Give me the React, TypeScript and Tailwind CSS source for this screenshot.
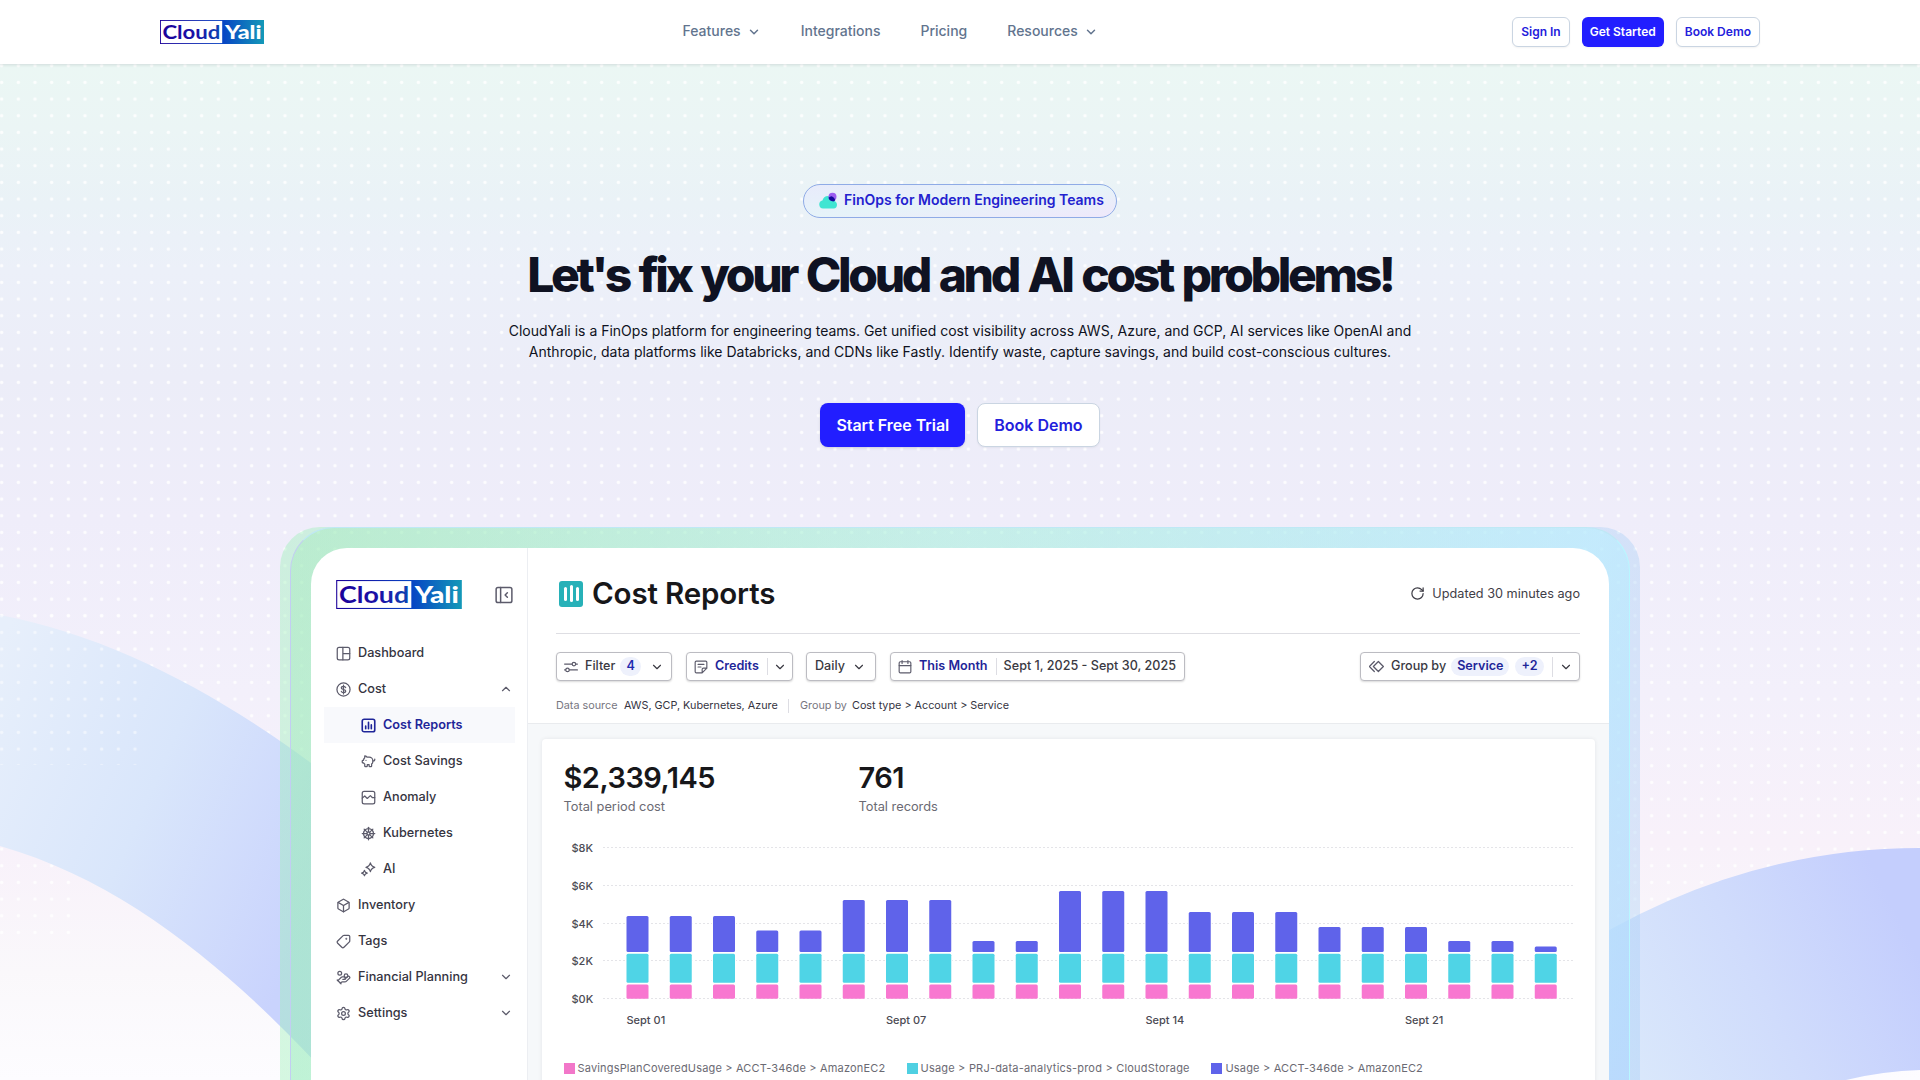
import React from "react";
import {
  Box,
  ChevronDown,
  ChevronUp,
  HandCoins,
  PiggyBank,
  RotateCw,
  Settings,
  ShipWheel,
  Tag,
} from "lucide-react";

type IconProps = { className?: string };

const Svg = ({ className, children }: { className?: string; children: React.ReactNode }) => (
  <svg
    viewBox="0 0 24 24"
    fill="none"
    stroke="currentColor"
    strokeWidth={2}
    strokeLinecap="round"
    strokeLinejoin="round"
    className={className}
  >
    {children}
  </svg>
);

const DashboardIcon = ({ className }: IconProps) => (
  <Svg className={className}>
    <rect x="2" y="2" width="20" height="20" rx="3" />
    <path d="M11 2v20M11 12h11" />
  </Svg>
);

const CostIcon = ({ className }: IconProps) => (
  <Svg className={className}>
    <circle cx="12" cy="12" r="10.5" />
    <path d="M15.5 9c-.5-1.400-1.900-2-3.500-2-2 0-3.500.9-3.500 2.500 0 3.500 7 1.500 7 5 0 1.600-1.500 2.500-3.500 2.500-1.600 0-3-.6-3.500-2M12 5v14" />
  </Svg>
);

const ReportsIcon = ({ className }: IconProps) => (
  <Svg className={className}>
    <rect x="2" y="2" width="20" height="20" rx="3" strokeWidth={2.6} />
    <path d="M7.500 17v-4M12 17V7M16.500 17v-6" strokeWidth={2.6} />
  </Svg>
);

const AnomalyIcon = ({ className }: IconProps) => (
  <Svg className={className}>
    <rect x="2" y="2" width="20" height="20" rx="3" />
    <path d="M2 13l4-3.500 4 4 5-4.500 3 3h4" />
  </Svg>
);

const AiIcon = ({ className }: IconProps) => (
  <Svg className={className}>
    <path d="M15 1.500c.8 4 2.200 5.700 7 7-4.800 1.300-6.200 3-7 7-.8-4-2.200-5.700-7-7 4.800-1.300 6.200-3 7-7z" />
    <path d="M5.500 13.500c.5 2.500 1.500 3.500 4.500 4.300-3 .8-4 1.700-4.500 4.200-.5-2.500-1.500-3.400-4.500-4.200 3-.8 4-1.800 4.500-4.300z" />
  </Svg>
);

const CollapseIcon = ({ className }: IconProps) => (
  <Svg className={className}>
    <rect x="1.500" y="2" width="21" height="20" rx="2.500" />
    <path d="M7.500 2v20M16.500 9l-3 3 3 3" />
  </Svg>
);

const FilterIcon = ({ className }: IconProps) => (
  <Svg className={className}>
    <path d="M1 7h13M1 17h2M9 17h14M20 7h3" />
    <circle cx="17" cy="7" r="3" />
    <circle cx="6" cy="17" r="3" />
  </Svg>
);

const CreditsIcon = ({ className }: IconProps) => (
  <Svg className={className}>
    <path d="M22 14V4a2 2 0 0 0-2-2H4a2 2 0 0 0-2 2v16a2 2 0 0 0 2 2h10l8-8h-6a2 2 0 0 0-2 2v6M7 7.500h10M7 12h5" />
  </Svg>
);

const CalendarIcon = ({ className }: IconProps) => (
  <Svg className={className}>
    <rect x="2" y="3" width="20" height="19" rx="2" />
    <path d="M2 9.500h20M7 1v5M17 1v5" />
  </Svg>
);

const GroupIcon = ({ className }: IconProps) => (
  <Svg className={className}>
    <path d="M15 4l8 8-8 8-8-8zM8.500 4l-8 8 8 8" />
  </Svg>
);

const Logo = ({ className, id }: { className?: string; id: string }) => (
  <svg viewBox="0 0 104 24" className={className}>
    <defs>
      <linearGradient id={`${id}-box`} x1="0" x2="1" y1="0" y2="0">
        <stop offset="0" stopColor="#1b0099" />
        <stop offset="0.6" stopColor="#0744c4" />
        <stop offset="1" stopColor="#1499b8" />
      </linearGradient>
      <linearGradient id={`${id}-text`} gradientUnits="userSpaceOnUse" x1="0" x2="62" y1="0" y2="0">
        <stop offset="0" stopColor="#1b0099" />
        <stop offset="0.6" stopColor="#1a12a8" />
        <stop offset="1" stopColor="#0c49b5" />
      </linearGradient>
    </defs>
    <rect width="104" height="24" fill={`url(#${id}-box)`} />
    <rect x="0.9" y="0.9" width="61.3" height="22.2" fill="#fff" />
    <text
      x="2.4"
      y="18.8"
      fontFamily="Lato, sans-serif"
      fontWeight="700"
      fontSize="19.5"
      textLength="58"
      lengthAdjust="spacingAndGlyphs"
      fill={`url(#${id}-text)`}
    >
      Cloud
    </text>
    <text
      x="65"
      y="18.8"
      fontFamily="Lato, sans-serif"
      fontWeight="900"
      fontSize="19.5"
      textLength="36.5"
      lengthAdjust="spacingAndGlyphs"
      fill="#fff"
    >
      Yali
    </text>
  </svg>
);

const Header = () => (
  <header className="relative z-10 flex h-16 items-center bg-white px-40 shadow-[0_1px_3px_rgba(15,23,42,0.12)]">
    <Logo id="top" className="h-6 w-[104px]" />
    <nav className="ml-[418.5px] flex items-center gap-10 pb-0.5 text-sm font-medium text-slate-500">
      <a className="flex items-center gap-1.5">
        Features <ChevronDown className="mt-0.5 h-3.5 w-3.5" strokeWidth={2.5} />
      </a>
      <a>Integrations</a>
      <a>Pricing</a>
      <a className="flex items-center gap-1.5">
        Resources <ChevronDown className="mt-0.5 h-3.5 w-3.5" strokeWidth={2.5} />
      </a>
    </nav>
    <div className="ml-auto flex gap-3 text-xs font-semibold text-[#2320dc]">
      <button className="h-[30px] rounded-md border border-slate-300 bg-white px-2 shadow-xs">Sign In</button>
      <button className="h-[30px] rounded-md bg-[#221eff] px-2 text-white shadow-xs">Get Started</button>
      <button className="h-[30px] rounded-md border border-slate-300 bg-white px-2 shadow-xs">Book Demo</button>
    </div>
  </header>
);

const Backdrop = () => (
  <svg className="absolute inset-0 h-full w-full" viewBox="0 0 1920 1080" preserveAspectRatio="none">
    <defs>
      <linearGradient id="sky" x1="0" x2="0" y1="0" y2="1">
        <stop offset="0.06" stopColor="#ebf7f4" />
        <stop offset="0.12" stopColor="#ebf5f5" />
        <stop offset="0.19" stopColor="#eaf2f7" />
        <stop offset="0.25" stopColor="#ecf0f9" />
        <stop offset="0.35" stopColor="#ecedf8" />
        <stop offset="0.48" stopColor="#efedfa" />
        <stop offset="0.64" stopColor="#f3f0fb" />
        <stop offset="0.78" stopColor="#f8f1fa" />
        <stop offset="0.9" stopColor="#faf8fb" />
        <stop offset="1" stopColor="#fdfcff" />
      </linearGradient>
      <pattern id="dots" x="10" y="7.4" width="16.667" height="16.667" patternUnits="userSpaceOnUse">
        <circle cx="8.33" cy="8.33" r="1.7" fill="#fff" fillOpacity="0.85" />
      </pattern>
      <linearGradient id="waveLeft" gradientUnits="userSpaceOnUse" x1="-20" y1="690" x2="340" y2="850">
        <stop offset="0" stopColor="#e7effb" />
        <stop offset="0.5" stopColor="#d9e6fb" />
        <stop offset="1" stopColor="#c9d3fd" />
      </linearGradient>
      <linearGradient id="waveRight" gradientUnits="userSpaceOnUse" x1="1620" y1="1060" x2="1900" y2="920">
        <stop offset="0" stopColor="#dae8fb" />
        <stop offset="0.5" stopColor="#d0dcfc" />
        <stop offset="1" stopColor="#c4cefd" />
      </linearGradient>
    </defs>
    <rect width="1920" height="1080" fill="url(#sky)" />
    <rect x="280" width="1640" height="920" fill="url(#dots)" />
    <rect width="280" height="765" fill="url(#dots)" />
    <rect y="840" width="75" height="100" fill="url(#dots)" />
    <path d="M0 615C110 636 215 692 311 763L420 850V1180C330 1078 190 900 0 846Z" fill="url(#waveLeft)" />
    <rect y="600" width="140" height="165" fill="url(#dots)" opacity="0.6" />
    <path d="M1560 960Q1730 848 1920 848V1070Q1880 1071 1838 1082H1560Z" fill="url(#waveRight)" />
  </svg>
);

const subItems = [
  { label: "Cost Reports", icon: ReportsIcon, active: true },
  { label: "Cost Savings", icon: PiggyBank, flip: true },
  { label: "Anomaly", icon: AnomalyIcon },
  { label: "Kubernetes", icon: ShipWheel },
  { label: "AI", icon: AiIcon },
];

const NavRow = ({ label, icon: Icon, chevron, flip }: any) => (
  <div className="flex h-9 items-center pr-3.5">
    <Icon className={`h-[15px] w-[15px] text-[#5c5b6b] ${flip ? "-scale-x-100" : ""}`} />
    <span className="ml-[7px]">{label}</span>
    {chevron === "up" && <ChevronUp className="ml-auto h-3.5 w-3.5 text-[#5c5b6b]" />}
    {chevron === "down" && <ChevronDown className="ml-auto h-3.5 w-3.5 text-[#5c5b6b]" />}
  </div>
);

const Sidebar = () => (
  <aside className="w-[217px] shrink-0 border-r border-[#eceef2] pt-8 pl-[25px] text-[12.7px] font-medium text-[#35343f]">
    <div className="flex items-center justify-between pr-3.5">
      <Logo id="side" className="h-[29px] w-[126px]" />
      <CollapseIcon className="h-[18px] w-[18px] text-[#5c5b6b]" />
    </div>
    <div className="mt-[26px]">
      <NavRow label="Dashboard" icon={DashboardIcon} />
      <NavRow label="Cost" icon={CostIcon} chevron="up" />
      {subItems.map(({ label, icon: Icon, active, flip }) => (
        <div
          key={label}
          className={`mr-3 -ml-3 flex h-9 items-center pl-[37px] ${active ? "bg-[#f8f9fc] font-semibold text-[#1f2699]" : ""}`}
        >
          <Icon className={`h-[15px] w-[15px] ${active ? "" : "text-[#5c5b6b]"} ${flip ? "-scale-x-100" : ""}`} />
          <span className="ml-[7px]">{label}</span>
        </div>
      ))}
      <NavRow label="Inventory" icon={Box} />
      <NavRow label="Tags" icon={Tag} flip />
      <NavRow label="Financial Planning" icon={HandCoins} chevron="down" />
      <NavRow label="Settings" icon={Settings} chevron="down" />
    </div>
  </aside>
);

const FilterBox = ({ className, children }: { className: string; children: React.ReactNode }) => (
  <div
    className={`flex h-[29px] items-center rounded-[4px] border border-[#bcbcc2] bg-white whitespace-nowrap shadow-[0_1px_2px_rgba(0,0,0,0.15)] ${className}`}
  >
    {children}
  </div>
);

const Toolbar = () => (
  <div className="mt-[18px] flex text-[12.6px] font-medium text-[#3a3942]">
    <FilterBox className="w-[116px] pl-[7px]">
      <FilterIcon className="h-3.5 w-3.5 text-[#5c5b6b]" />
      <span className="ml-[7px]">Filter</span>
      <span className="ml-[5px] rounded-full bg-[#eef1fc] px-[6px] font-semibold text-[#1f2bb0]">4</span>
      <ChevronDown className="ml-[9px] h-3.5 w-3.5" />
    </FilterBox>
    <FilterBox className="ml-3.5 w-[107px] pl-[7px]">
      <CreditsIcon className="h-3.5 w-3.5 text-[#5c5b6b]" />
      <span className="ml-[7px] font-semibold text-[#1f2699]">Credits</span>
      <span className="ml-2 h-[17px] w-px bg-[#dddde3]" />
      <ChevronDown className="ml-[5px] h-3.5 w-3.5" />
    </FilterBox>
    <FilterBox className="ml-[13px] w-[70px] pl-2">
      <span>Daily</span>
      <ChevronDown className="ml-[7px] h-3.5 w-3.5" />
    </FilterBox>
    <FilterBox className="ml-3.5 w-[295px] pl-[7px]">
      <CalendarIcon className="h-3.5 w-3.5 text-[#5c5b6b]" />
      <span className="ml-[7px] font-semibold text-[#1f2699]">This Month</span>
      <span className="mr-[7px] ml-2 h-[17px] w-px bg-[#dddde3]" />
      <span>Sept 1, 2025 - Sept 30, 2025</span>
    </FilterBox>
    <FilterBox className="ml-auto w-[220px] pl-[8px]">
      <GroupIcon className="h-[15px] w-[15px] text-[#5c5b6b]" />
      <span className="ml-[7px]">Group by</span>
      <span className="ml-[5px] rounded-full bg-[#eef1fc] px-[6px] font-semibold text-[#1f2699]">Service</span>
      <span className="ml-1.5 rounded-full bg-[#eef1fc] px-[6px] font-semibold text-[#1f2699]">+2</span>
      <span className="ml-2 h-[20px] w-px bg-[#dddde3]" />
      <ChevronDown className="ml-1.5 h-3.5 w-3.5" />
    </FilterBox>
  </div>
);

// Height in px of the top segment of each daily bar
const bars = [36, 36, 36, 21.5, 21.5, 52, 52, 52, 11, 11, 61, 61, 61, 40, 40, 40, 25, 25, 25, 11, 11, 5.5];

const ticks = [
  { label: "$8K", y: 10 },
  { label: "$6K", y: 47.7 },
  { label: "$4K", y: 85.5 },
  { label: "$2K", y: 123.3 },
  { label: "$0K", y: 161 },
];

const days = [
  { label: "Sept 01", x: 62.5 },
  { label: "Sept 07", x: 322 },
  { label: "Sept 14", x: 581.5 },
  { label: "Sept 21", x: 841 },
];

const Chart = () => (
  <svg width="1016" height="200" className="mt-[21px] block" fontFamily="Inter, sans-serif" fontSize="11">
    {ticks.map((t) => (
      <g key={t.label}>
        <text x="7.5" y={t.y + 4} fill="#4b4a53" fontWeight="500">
          {t.label}
        </text>
        <path d={`M39 ${Math.round(t.y) - 0.5}H1009`} stroke="#e4e4e8" strokeDasharray="2 2" />
      </g>
    ))}
    {bars.map((h, i) => {
      const x = 62.5 + i * 43.25;
      return (
        <g key={i}>
          <rect x={x - 1} y={113 - h} width="24" height={h + 47} fill="#fff" />
          <rect x={x} y={114 - h} width="22" height={h} rx="1.5" fill="#5f63ea" />
          <rect x={x} y="115.7" width="22" height="29" rx="1.5" fill="#4fd4e6" />
          <rect x={x} y="146.5" width="22" height="14.3" rx="1.5" fill="#f877d0" />
        </g>
      );
    })}
    {days.map((d) => (
      <text key={d.label} x={d.x} y="186" fill="#4b4a53" fontWeight="500">
        {d.label}
      </text>
    ))}
  </svg>
);

const Legend = () => (
  <div className="mt-[22px] flex items-center text-[11px] tracking-[0.17px] whitespace-nowrap text-[#6b6a73]">
    <span className="h-[11px] w-[11px] bg-[#f277c9]" />
    <span className="ml-[3px] w-[307px]">SavingsPlanCoveredUsage &gt; ACCT-346de &gt; AmazonEC2</span>
    <span className="ml-[22px] h-[11px] w-[11px] bg-[#4fd0e2]" />
    <span className="ml-[3px] w-[269px] tracking-[0.2px]">Usage &gt; PRJ-data-analytics-prod &gt; CloudStorage</span>
    <span className="ml-[21px] h-[11px] w-[11px] bg-[#5f63ea]" />
    <span className="ml-[4px]">Usage &gt; ACCT-346de &gt; AmazonEC2</span>
  </div>
);

const Stat = ({ value, label }: { value: string; label: string }) => (
  <div className="w-[295px]">
    <div className="text-[29px] leading-[38px] font-semibold tracking-[-0.5px] text-[#17171a]">{value}</div>
    <div className="text-[12.8px] leading-[20px] text-[#6b6a73]">{label}</div>
  </div>
);

const Report = () => (
  <main className="flex min-w-0 flex-1 flex-col">
    <div className="h-[175px] pr-[29px] pl-7">
      <div className="flex h-[86px] items-center border-b border-[#dedee3] pt-1.5">
        <span className="ml-[3px] flex h-[26px] w-6 items-center justify-center gap-[3px] rounded-[3px] bg-[#27b1b8]">
          <span className="h-[14px] w-[3px] rounded-full bg-white" />
          <span className="h-[17px] w-[3px] rounded-full bg-white" />
          <span className="h-[14px] w-[3px] rounded-full bg-white" />
        </span>
        <h2 className="ml-[9px] text-[29.5px] font-semibold tracking-[-0.15px] text-[#17171a]">Cost Reports</h2>
        <span className="ml-auto flex items-center gap-[7px] text-[12.7px] text-[#3f3e47]">
          <RotateCw className="h-[15px] w-[15px]" />
          Updated 30 minutes ago
        </span>
      </div>
      <Toolbar />
      <div className="mt-[17px] flex items-center text-[10.8px] whitespace-nowrap text-[#77767f]">
        <span className="w-[68px]">Data source</span>
        <span className="w-[164px] text-[#35343f]">AWS, GCP, Kubernetes, Azure</span>
        <span className="mr-[11px] h-3.5 w-px bg-[#dddde3]" />
        <span className="w-[52px]">Group by</span>
        <span className="text-[#35343f]">Cost type &gt; Account &gt; Service</span>
      </div>
    </div>
    <div className="flex-1 border-t border-[#e9ebee] bg-[#f6f8fa] px-3.5 pt-[15px]">
      <div className="h-[400px] rounded-t-[4px] bg-white pt-[20px] pl-[21.5px] shadow-[0_0_4px_rgba(15,23,42,0.08)]">
        <div className="flex">
          <Stat value="$2,339,145" label="Total period cost" />
          <Stat value="761" label="Total records" />
        </div>
        <Chart />
        <Legend />
      </div>
    </div>
  </main>
);

const CloudIcon = () => (
  <svg width="19" height="18" viewBox="0 0 19 18">
    <path
      d="M4 16.500a4 4 0 0 1-.6-7.900A6 6 0 0 1 9 4c3 0 4.500 2 5 4.500 2.600.3 4 2 4 4.200 0 2.300-1.300 3.800-3.200 3.800z"
      fill="#3fe5d2"
    />
    <circle cx="13.5" cy="4.8" r="4" fill="#9b5cf0" />
    <path d="M9.600 5.500a6 6 0 0 1 3-1.300c2 .6 3.500 2.300 3.600 4.400a4.600 4.600 0 0 1-1.800.8C11.500 9.400 9.600 7.600 9.600 5.500z" fill="#160a9c" />
  </svg>
);

const Hero = () => (
  <section className="relative flex flex-col items-center pt-[120px]">
    <div className="flex h-[34px] items-center gap-1.5 rounded-full border border-[#8fabe6] bg-linear-to-br from-[#e8ebfb] via-[#e6f3f9] to-[#efe8fb] pr-3 pl-[15px] text-sm font-semibold text-[#2322cf]">
      <CloudIcon />
      <span className="pb-0.5">FinOps for Modern Engineering Teams</span>
    </div>
    <h1 className="mt-[33px] text-5xl leading-[48px] font-extrabold tracking-[-0.07em] text-[#0f1222] [word-spacing:2.5px]">
      Let's fix your Cloud and AI cost problems!
    </h1>
    <p className="mt-[21px] text-center text-sm leading-[21px] text-[#0f1222]">
      CloudYali is a FinOps platform for engineering teams. Get unified cost visibility across AWS, Azure, and GCP, AI
      services like OpenAI and
      <br />
      Anthropic, data platforms like Databricks, and CDNs like Fastly. Identify waste, capture savings, and build
      cost-conscious cultures.
    </p>
    <div className="mt-[41px] flex gap-3 font-semibold">
      <button className="h-11 rounded-lg bg-[#221eff] px-4 tracking-[-0.03px] text-white shadow-sm">
        Start Free Trial
      </button>
      <button className="h-11 rounded-lg border border-slate-300 bg-white px-4 text-[#2320dc] shadow-xs">
        Book Demo
      </button>
    </div>
    <div className="mt-20 w-[1360px] rounded-t-[40px] bg-linear-to-r from-[#98f0b4]/40 via-[#a8f0e8]/20 to-[#a9cff6]/40 px-[10px]">
      <div className="rounded-t-[44px] border border-b-0 border-t-[#bfe8f5] border-r-[#b8f7ff] border-l-[#c2cdf2] bg-[linear-gradient(115deg,rgba(159,232,184,0.4)_0%,rgba(165,240,220,0.45)_45%,rgba(185,240,255,0.6)_78%,rgba(176,208,255,0.65)_100%)] px-[20px] pt-5">
        <div className="flex h-[720px] overflow-hidden rounded-t-[36px] bg-white">
          <Sidebar />
          <Report />
        </div>
      </div>
    </div>
  </section>
);

const App: React.FC = () => {
  return (
    <div className="relative h-screen overflow-hidden font-['Inter',sans-serif]">
      <Backdrop />
      <Header />
      <Hero />
    </div>
  );
};

export default App;
